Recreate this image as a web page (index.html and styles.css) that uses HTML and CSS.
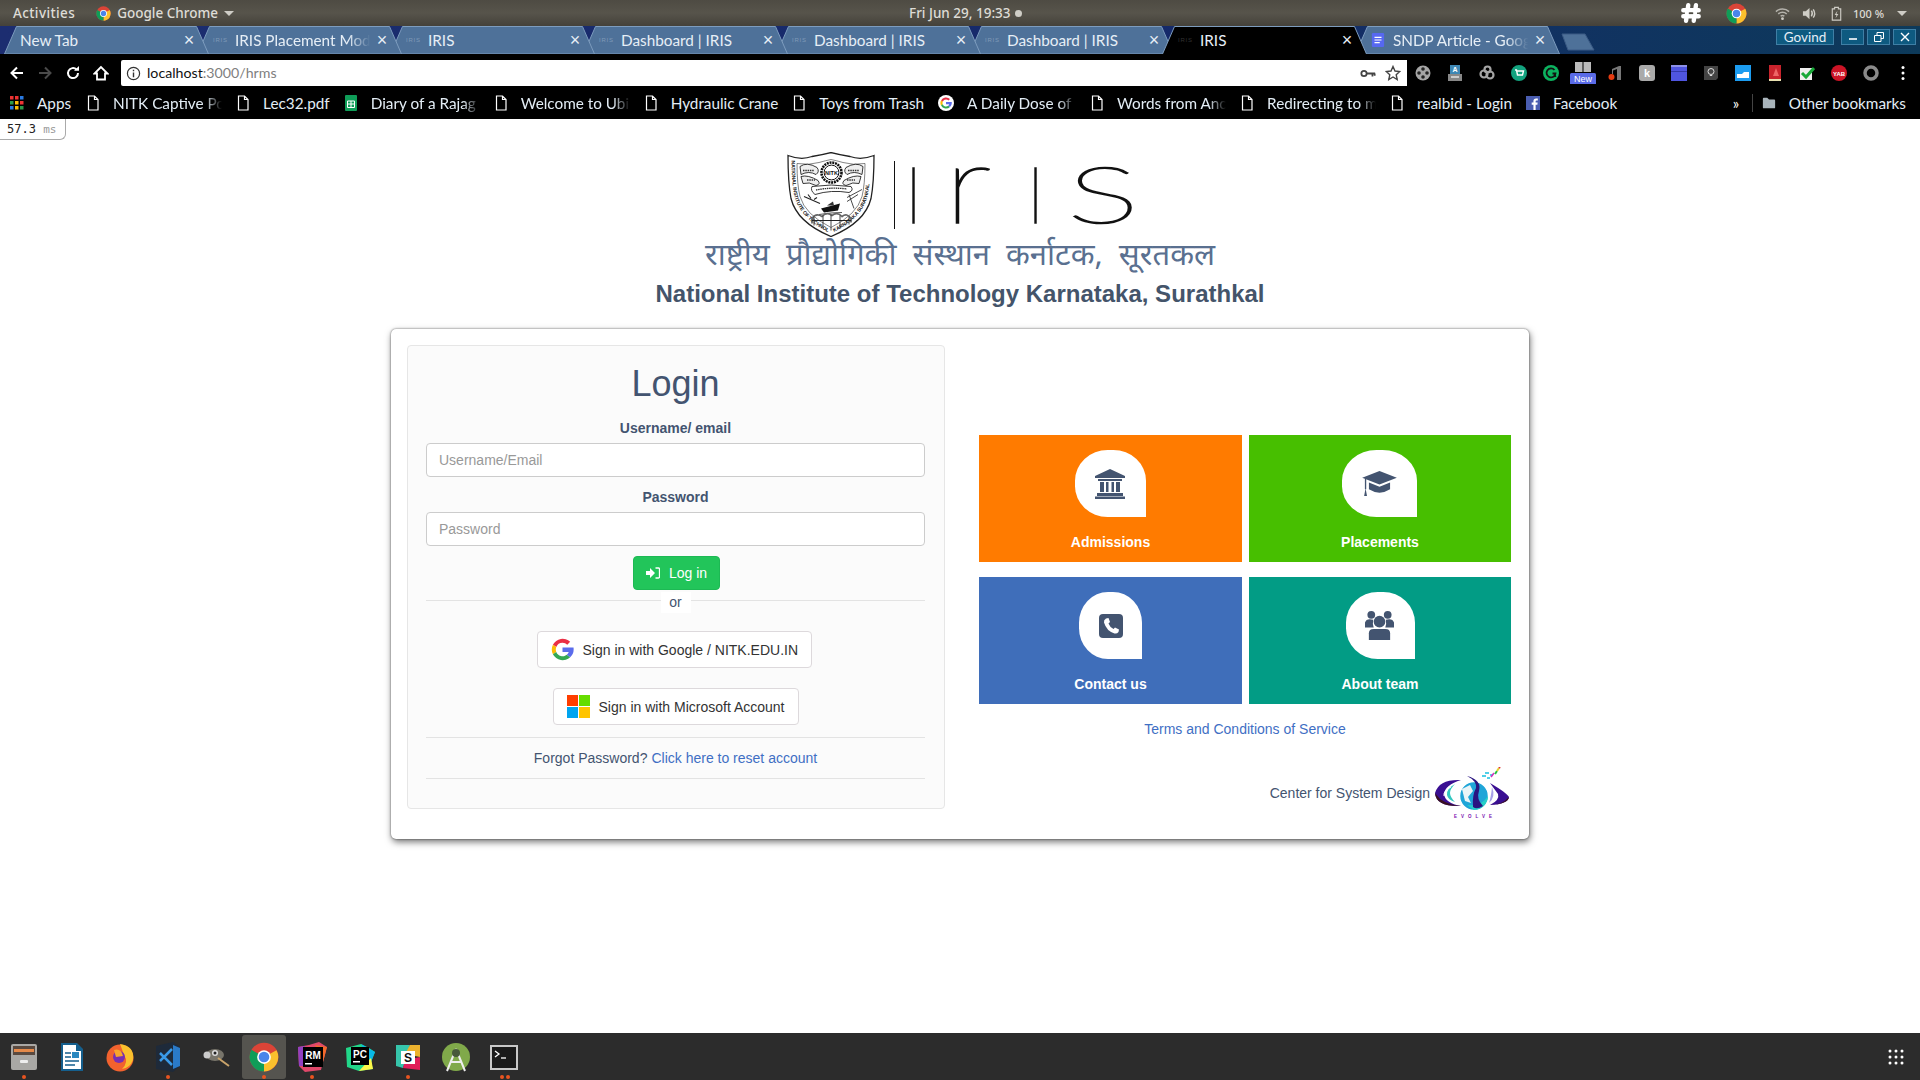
FILE: index.html
```html
<!DOCTYPE html>
<html lang="en">
<head>
<meta charset="utf-8">
<title>IRIS</title>
<link rel="stylesheet" href="styles.css">
</head>
<body>
<svg class="defs" width="0" height="0" aria-hidden="true">
  <defs>
    <symbol id="tabshape" viewBox="0 0 205 28"><path d="M0.5 28 L12.5 0.5 H192.5 L204.5 28 Z" fill="#4e7199" stroke="#7d9cbe" stroke-width="1"/></symbol>
    <symbol id="tabactive" viewBox="0 0 205 28"><path d="M0.5 28 L12.5 0.5 H192.5 L204.5 28" fill="#000" stroke="#7d9cbe" stroke-width="1"/></symbol>
    <symbol id="filei" viewBox="0 0 14 16"><path d="M2.5 1 H8.5 L12 4.5 V15 H2.5 Z M8.5 1 V4.5 H12" fill="none" stroke="#fff" stroke-width="1.2"/></symbol>
    <symbol id="chromei" viewBox="0 0 48 48">
      <circle cx="24" cy="24" r="23" fill="#db4437"/>
      <path d="M24 24 L44 13 A23 23 0 0 1 24 47 Z" fill="#fbc02d"/>
      <path d="M24 24 L24 47 A23 23 0 0 1 4 12.5 Z" fill="#0f9d58"/>
      <circle cx="24" cy="24" r="11" fill="#fff"/><circle cx="24" cy="24" r="8.5" fill="#4a85ea"/>
    </symbol>
    <symbol id="gi" viewBox="0 0 24 24">
      <path d="M12 5 A7 7 0 0 1 17 7 L20 4 A11.5 11.5 0 0 0 2 7 L5.5 9.5 A7 7 0 0 1 12 5Z" fill="#ea2f45"/>
      <path d="M2 7 A11.5 11.5 0 0 0 2 17 L5.5 14.5 A7 7 0 0 1 5.5 9.5Z" fill="#fbbc05"/>
      <path d="M2 17 A11.5 11.5 0 0 0 20 20 L16.5 17.5 A7 7 0 0 1 5.5 14.5Z" fill="#34a853"/>
      <path d="M23.5 10 H12 V14.5 H18.5 A6 6 0 0 1 16.5 17.5 L20 20 A11.5 11.5 0 0 0 23.5 10Z" fill="#5b6cec"/>
    </symbol>
  </defs>
</svg>

<header class="os-bar">
  <div class="os-left">
    <span class="os-act">Activities</span>
    <span class="os-app"><svg class="i16"><use href="#chromei"/></svg>Google Chrome<i class="caret"></i></span>
  </div>
  <div class="os-clock">Fri Jun 29, 19:33<i class="os-dot"></i></div>
  <div class="os-right">
    <svg class="slack" viewBox="0 0 20 20"><path d="M7.500 3 L5.500 17 M14.500 3 L12.500 17 M3 7.500 H17 M3 13 H17" stroke="#fff" stroke-width="4" stroke-linecap="round" fill="none"/><path d="M8 9.500 H12 V11 H8Z" fill="#4e4b43"/></svg>
    <svg class="os-chrome"><use href="#chromei"/></svg>
    <svg class="os-ico" viewBox="0 0 16 16"><path d="M1 6 A10 10 0 0 1 15 6 M3.500 8.500 A6.500 6.500 0 0 1 12.500 8.500 M6 11 A3 3 0 0 1 10 11" fill="none" stroke="#b5b3ac" stroke-width="1.600"/><circle cx="8" cy="13.500" r="1.500" fill="#cfcdc6"/></svg>
    <svg class="os-ico" viewBox="0 0 16 16"><path d="M1 5.500 H4 L8 2 V14 L4 10.500 H1Z" fill="#cfcdc6"/><path d="M10 5 Q12 8 10 11 M12 3.500 Q15 8 12 12.500" fill="none" stroke="#cfcdc6" stroke-width="1.500"/></svg>
    <svg class="os-ico" viewBox="0 0 16 16"><path d="M3.500 3 H6 V1.500 H10 V3 H12.500 V15 H3.500Z" fill="none" stroke="#cfcdc6" stroke-width="1.200"/><path d="M9 5 L6 9.500 H8 L7 13 L10 8.500 H8Z" fill="#cfcdc6"/></svg>
    <span class="os-pct">100 %</span>
    <i class="caret"></i>
  </div>
</header>

<nav class="tabstrip">
  <div class="tab tab-1"><svg class="tab-shape"><use href="#tabshape"/></svg><span class="tab-title">New Tab</span><span class="tab-x">×</span></div>
  <div class="tab tab-2"><svg class="tab-shape"><use href="#tabshape"/></svg><span class="fav">IRIS</span><span class="tab-title fade">IRIS Placement Mod</span><span class="tab-x">×</span></div>
  <div class="tab tab-3"><svg class="tab-shape"><use href="#tabshape"/></svg><span class="fav">IRIS</span><span class="tab-title">IRIS</span><span class="tab-x">×</span></div>
  <div class="tab tab-4"><svg class="tab-shape"><use href="#tabshape"/></svg><span class="fav">IRIS</span><span class="tab-title">Dashboard | IRIS</span><span class="tab-x">×</span></div>
  <div class="tab tab-5"><svg class="tab-shape"><use href="#tabshape"/></svg><span class="fav">IRIS</span><span class="tab-title">Dashboard | IRIS</span><span class="tab-x">×</span></div>
  <div class="tab tab-6"><svg class="tab-shape"><use href="#tabshape"/></svg><span class="fav">IRIS</span><span class="tab-title">Dashboard | IRIS</span><span class="tab-x">×</span></div>
  <div class="tab tab-7 active"><svg class="tab-shape"><use href="#tabactive"/></svg><span class="fav">IRIS</span><span class="tab-title">IRIS</span><span class="tab-x">×</span></div>
  <div class="tab tab-8"><svg class="tab-shape"><use href="#tabshape"/></svg><svg class="docfav" viewBox="0 0 16 16"><rect x="1" y="0" width="14" height="16" rx="1.500" fill="#5668f0"/><path d="M4 5 H12 M4 8 H12 M4 11 H10" stroke="#fff" stroke-width="1.200"/></svg><span class="tab-title fade">SNDP Article - Goog</span><span class="tab-x">×</span></div>
  <svg class="newtab" viewBox="0 0 34 18"><path d="M1 1 H24 L33 17 H7 Z" fill="#4e7199" stroke="#3a5a85"/></svg>
  <div class="win-ctl">
    <span class="win-user">Govind</span>
    <span class="win-btn"><svg viewBox="0 0 12 12"><path d="M2 8 H10" stroke="#fff" stroke-width="1.600"/></svg></span>
    <span class="win-btn"><svg viewBox="0 0 12 12"><path d="M1.500 4.500 H8 V10.500 H1.500Z M4 4.500 V1.500 H10.500 V7.500 H8" fill="none" stroke="#fff"/></svg></span>
    <span class="win-btn"><svg viewBox="0 0 12 12"><path d="M2 2 L10 10 M10 2 L2 10" stroke="#fff" stroke-width="1.400"/></svg></span>
  </div>
</nav>

<div class="toolbar">
  <div class="nav-btns">
    <svg class="nav" viewBox="0 0 16 16"><path d="M14 8 H3 M8 2.500 L2.500 8 L8 13.500" fill="none" stroke="#fff" stroke-width="2"/></svg>
    <svg class="nav" viewBox="0 0 16 16"><path d="M2 8 H13 M8 2.500 L13.500 8 L8 13.500" fill="none" stroke="#4a4a4a" stroke-width="2"/></svg>
    <svg class="nav" viewBox="0 0 16 16"><path d="M13 8 A5 5 0 1 1 11.500 4.500" fill="none" stroke="#fff" stroke-width="2"/><path d="M9 5.800 H14 V1Z" fill="#fff"/></svg>
    <svg class="nav" viewBox="0 0 16 16"><path d="M8 2 L1.500 8.500 H4 V14.500 H12 V8.500 H14.500Z" fill="none" stroke="#fff" stroke-width="1.800"/></svg>
  </div>
  <div class="url">
    <svg class="url-i" viewBox="0 0 16 16"><circle cx="8" cy="8" r="6.500" fill="none" stroke="#333" stroke-width="1.300"/><path d="M8 7 V12 M8 4 V5.600" stroke="#333" stroke-width="1.500"/></svg>
    <span class="url-text"><b>localhost</b>:3000/hrms</span>
    <svg class="url-key" viewBox="0 0 18 12"><circle cx="4.500" cy="6" r="3" fill="none" stroke="#444" stroke-width="2"/><path d="M7.500 6 H17 M14 6 V9.500 M16.500 6 V8.500" stroke="#444" stroke-width="2"/></svg>
    <svg class="url-star" viewBox="0 0 16 16"><path d="M8 1.500 L10 6 L14.800 6.500 L11.200 9.700 L12.200 14.500 L8 12 L3.800 14.500 L4.800 9.700 L1.200 6.500 L6 6Z" fill="none" stroke="#444" stroke-width="1.400"/></svg>
  </div>
  <div class="exts">
    <svg class="ext" viewBox="0 0 16 16"><circle cx="8" cy="8" r="7.500" fill="#a5a5a5"/><circle cx="8" cy="4" r="1.800" fill="#222"/><circle cx="8" cy="12" r="1.800" fill="#222"/><circle cx="4" cy="8" r="1.800" fill="#222"/><circle cx="12" cy="8" r="1.800" fill="#222"/></svg>
    <svg class="ext" viewBox="0 0 16 16"><path d="M3 0 H13 V10 H3Z" fill="#3f88b5"/><path d="M1 9 H15 V16 H1Z" fill="#888"/><path d="M4 11 H12 V13 H4Z" fill="#ccc"/><text x="8" y="7" class="svgt st7" text-anchor="middle" fill="#fff">A</text></svg>
    <svg class="ext" viewBox="0 0 16 16"><circle cx="5" cy="9" r="3.500" fill="none" stroke="#a5a5a5" stroke-width="2.200"/><circle cx="11" cy="10" r="3.500" fill="none" stroke="#a5a5a5" stroke-width="2.200"/><circle cx="8.500" cy="4.500" r="3" fill="none" stroke="#a5a5a5" stroke-width="2.200"/></svg>
    <svg class="ext" viewBox="0 0 16 16"><circle cx="8" cy="8" r="8" fill="#13a37f"/><path d="M4 5 H5.500 L6.500 10 H11.500 L12.500 6 H6" fill="none" stroke="#fff" stroke-width="1.400"/></svg>
    <svg class="ext" viewBox="0 0 16 16"><circle cx="8" cy="8" r="8" fill="#0cb25f"/><path d="M11.500 5 A4.500 4.500 0 1 0 12.500 8.500 H9.500 M11.500 8.500 L12.500 12" fill="none" stroke="#111" stroke-width="1.800"/></svg>
    <svg class="ext ext-new" viewBox="0 0 26 22"><path d="M5 0 H12.500 V10 H5Z M13.500 0 H21 V10 H13.500Z" fill="#bbb"/><rect x="0" y="11" width="26" height="12" rx="1.500" fill="#5a6be8"/><text x="13" y="20" class="svgt st9" text-anchor="middle" fill="#fff">New</text></svg>
    <svg class="ext" viewBox="0 0 16 16"><path d="M5 4 L12 1 H14 V15 H10 V4 L6 5.500 V9 H5Z" fill="#777"/><circle cx="4.500" cy="12" r="3" fill="#e63b10"/></svg>
    <svg class="ext" viewBox="0 0 16 16"><rect width="16" height="16" rx="3" fill="#aaa"/><text x="8" y="12" class="svgt st11" text-anchor="middle" fill="#fff">k</text></svg>
    <svg class="ext" viewBox="0 0 16 16"><rect width="16" height="16" fill="#4f55e0"/><rect width="16" height="2" fill="#8d90e8"/><rect y="6" width="16" height="1" fill="#3338a8"/></svg>
    <svg class="ext" viewBox="0 0 16 16"><path d="M1 1 H15 V13 L13 15 H1Z" fill="#444"/><circle cx="8" cy="6.500" r="3" fill="none" stroke="#ddd"/><path d="M6.800 10.500 H9.200" stroke="#ddd"/></svg>
    <svg class="ext" viewBox="0 0 16 16"><rect width="16" height="16" fill="#1c9cf0"/><path d="M2 9 H7 L9 7 H14 V13 H2Z" fill="#fff"/></svg>
    <svg class="ext" viewBox="0 0 16 16"><path d="M2 0 H14 V14 H2Z" fill="#c8232c"/><path d="M2 14 H14 V16 H2Z" fill="#e8e0b0"/><path d="M9 3 L12 11 H6Z" fill="#e66"/></svg>
    <svg class="ext" viewBox="0 0 16 16"><rect x="1" y="3" width="12" height="12" fill="#eee"/><path d="M3 8 L7 12 L15 3" fill="none" stroke="#18a838" stroke-width="3"/></svg>
    <svg class="ext" viewBox="0 0 16 16"><circle cx="8" cy="8" r="8" fill="#cc1426"/><text x="8" y="10.500" class="svgt st6" text-anchor="middle" fill="#fff">YAB</text></svg>
    <svg class="ext" viewBox="0 0 16 16"><circle cx="8" cy="8" r="6" fill="none" stroke="#8a8a8a" stroke-width="3.500"/></svg>
    <svg class="menu" viewBox="0 0 4 16"><circle cx="2" cy="2.500" r="1.500" fill="#fff"/><circle cx="2" cy="8" r="1.500" fill="#fff"/><circle cx="2" cy="13.500" r="1.500" fill="#fff"/></svg>
  </div>
</div>

<div class="bookmarks">
  <span class="bm bm-apps">
    <svg class="bm-i" viewBox="0 0 14 14"><rect width="3.500" height="3.500" fill="#e33"/><rect x="5" width="3.500" height="3.500" fill="#e33"/><rect x="10" width="3.500" height="3.500" fill="#2a7ae2"/><rect y="5" width="3.500" height="3.500" fill="#2a9a4a"/><rect x="5" y="5" width="3.500" height="3.500" fill="#fbbc05"/><rect x="10" y="5" width="3.500" height="3.500" fill="#e33"/><rect y="10" width="3.500" height="3.500" fill="#2a7ae2"/><rect x="5" y="10" width="3.500" height="3.500" fill="#fbbc05"/><rect x="10" y="10" width="3.500" height="3.500" fill="#2a9a4a"/></svg>
    <span class="bm-t">Apps</span></span>
  <span class="bm"><svg class="bm-i"><use href="#filei"/></svg><span class="bm-t cut">NITK Captive Po</span></span>
  <span class="bm"><svg class="bm-i"><use href="#filei"/></svg><span class="bm-t">Lec32.pdf</span></span>
  <span class="bm"><svg class="bm-i" viewBox="0 0 14 16"><rect x="1" width="12" height="16" rx="1" fill="#0f9d58"/><path d="M3.500 6 H10.500 V12.500 H3.500Z M3.500 9 H10.500 M7 6 V12.500" fill="none" stroke="#fff"/></svg><span class="bm-t cut">Diary of a Rajag</span></span>
  <span class="bm"><svg class="bm-i"><use href="#filei"/></svg><span class="bm-t cut">Welcome to Ubi</span></span>
  <span class="bm"><svg class="bm-i"><use href="#filei"/></svg><span class="bm-t">Hydraulic Crane</span></span>
  <span class="bm"><svg class="bm-i"><use href="#filei"/></svg><span class="bm-t">Toys from Trash</span></span>
  <span class="bm"><span class="g-disc"><svg viewBox="0 0 24 24"><use href="#gi"/></svg></span><span class="bm-t cut">A Daily Dose of</span></span>
  <span class="bm"><svg class="bm-i"><use href="#filei"/></svg><span class="bm-t cut">Words from Anc</span></span>
  <span class="bm"><svg class="bm-i"><use href="#filei"/></svg><span class="bm-t cut">Redirecting to m</span></span>
  <span class="bm"><svg class="bm-i"><use href="#filei"/></svg><span class="bm-t">realbid - Login</span></span>
  <span class="bm"><svg class="bm-i" viewBox="0 0 16 16"><rect width="16" height="16" fill="#4a5db0"/><path d="M11 16 V10 H13 L13.300 7.500 H11 V6 Q11 5 12 5 H13.500 V2.800 H11.500 Q8.500 2.800 8.500 5.800 V7.500 H6.500 V10 H8.500 V16Z" fill="#fff"/></svg><span class="bm-t">Facebook</span></span>
  <span class="bm-more">»</span>
  <span class="bm bm-other"><svg class="bm-i" viewBox="0 0 16 14"><path d="M1 2 Q1 1 2 1 H6 L8 3 H14 Q15 3 15 4 V12 Q15 13 14 13 H2 Q1 13 1 12Z" fill="#a9b4bb"/></svg><span class="bm-t">Other bookmarks</span></span>
</div>

<main class="page">
  <div class="perf"><span>57.3</span> <em>ms</em></div>

  <div class="brand">
    <div class="brand-logo">
      <svg class="shield" viewBox="0 0 88 84">
        <path d="M1 3 Q14 8 25 4 Q36 2 44 0 Q52 2 63 4 Q74 8 87 3 Q87 30 84 46 Q78 70 44 84 Q10 70 4 46 Q1 30 1 3Z" fill="#fff" stroke="#222" stroke-width="1.300"/>
        <path d="M10 11 Q22 13 32 10 Q39 8 44 7 Q49 8 56 10 Q66 13 78 11 Q78 32 75 44 Q70 62 44 75 Q18 62 13 44 Q10 32 10 11Z" fill="none" stroke="#333" stroke-width=".6"/>
        <path id="arcl" d="M4.500 7 Q4.500 32 8 46 Q15 67 42 80" fill="none"/>
        <path id="arcr" d="M46 80 Q73 67 80 46 Q83.500 32 83.500 7" fill="none"/>
        <text class="svgt st5b" fill="#111"><textPath href="#arcl" startOffset="1">NATIONAL INSTITUTE OF TECHNOLOGY</textPath></text>
        <text class="svgt st5b" fill="#111"><textPath href="#arcr" startOffset="1">KARNATAKA SURATHKAL</textPath></text>
        <circle cx="44.500" cy="20" r="10" fill="none" stroke="#111" stroke-width="2.600" stroke-dasharray="2 .8"/>
        <circle cx="44.500" cy="20" r="7.400" fill="#fff" stroke="#111" stroke-width="1"/>
        <text x="44.500" y="22" class="svgt st5c" text-anchor="middle" fill="#111">NITK</text>
        <path d="M13 14 Q20 9 30 15 Q33 19 29 22 Q22 18 14 22Z M76 14 Q69 9 59 15 Q56 19 60 22 Q67 18 75 22Z" fill="#eee" stroke="#222" stroke-width=".9"/>
        <path d="M16 18 H27 M61 18 H72" stroke="#333" stroke-width="1.500" stroke-dasharray="1.500 .8"/>
        <path d="M14 24 Q21 22 31 28 Q34 32 29 33 Q22 29 16 31Z M74 24 Q67 22 57 28 Q54 32 59 33 Q66 29 72 31Z" fill="#eee" stroke="#222" stroke-width=".9"/>
        <path d="M20 27.500 H28 M60 27.500 H68" stroke="#333" stroke-width="1.400" stroke-dasharray="1.500 .8"/>
        <path d="M25 34 Q44 31 64 34 Q67 38 62 40 Q44 37 28 42 Q23 38 25 34Z" fill="#fff" stroke="#222" stroke-width=".9"/>
        <path d="M29 37.500 Q44 34.500 60 36.500" fill="none" stroke="#333" stroke-width="1.300" stroke-dasharray="1.500 .7"/>
        <path d="M17 44 L33 51 M21 42 L24 46 M27 47 L30 45" stroke="#222" stroke-width="1.100"/>
        <path d="M60 45 L75 37 M60 49 L71 42 M62 42 L67 56" stroke="#333" stroke-width=".9"/>
        <path d="M34 56 L53 51 L51 58 L37 60Z" fill="#111"/><path d="M40 53 L46 49 L47 53Z" fill="#333"/><path d="M32 62 Q44 60 55 60" stroke="#555" fill="none"/>
        <path d="M25 71 V66 Q29 60 35 64 Q40 59 45 63 Q50 59 55 64 Q60 60 64 66 V70" fill="none" stroke="#666" stroke-width="1.700"/>
        <path d="M27 64 V73 M36 63 V76 M44 62 V78 M53 63 V76 M62 64 V72" stroke="#333" stroke-width=".9"/>
        <path d="M25 68 H64" stroke="#222" stroke-width="1"/>
      </svg>
      <div class="logo-rule"></div>
      <div class="logo-word"><span class="lw-i1">I</span><span class="lw-r">r</span><span class="lw-i2">I</span><span class="lw-s">S</span></div>
    </div>
    <div class="brand-hi">राष्ट्रीय प्रौद्योगिकी संस्थान कर्नाटक, सूरतकल</div>
    <div class="brand-en">National Institute of Technology Karnataka, Surathkal</div>
  </div>

  <section class="card">
    <form class="login">
      <h2 class="login-h">Login</h2>
      <label class="lbl">Username/ email</label>
      <input class="field" type="text" placeholder="Username/Email">
      <label class="lbl">Password</label>
      <input class="field" type="password" placeholder="Password">
      <div class="center"><button class="btn-login" type="button">
        <svg class="signin" viewBox="0 0 14 12"><path d="M0 4 H4 V1 L9 6 L4 11 V8 H0Z" fill="#fff"/><path d="M9.500 1 H12.500 Q13.500 1 13.500 2 V10 Q13.500 11 12.500 11 H9.500" fill="none" stroke="#fff" stroke-width="1.300"/></svg>
        Log in</button></div>
      <div class="or"><span>or</span></div>
      <div class="center"><a class="sso sso-g"><svg class="sso-i" viewBox="0 0 24 24"><use href="#gi"/></svg>Sign in with Google / NITK.EDU.IN</a></div>
      <div class="center"><a class="sso sso-m"><span class="ms"><i class="ms-r"></i><i class="ms-g"></i><i class="ms-b"></i><i class="ms-y"></i></span>Sign in with Microsoft Account</a></div>
      <div class="forgot">Forgot Password? <a class="link">Click here to reset account</a></div>
    </form>

    <div class="side">
      <div class="tiles">
        <a class="tile t-orange">
          <span class="chip chip-a"><svg class="ti ti-bank" viewBox="0 0 30 30"><path d="M15 0 L30 7 V9 H0 V7Z M3 10 H27 V12 H3Z M5 13 H9 V23 H5Z M11 13 H13.500 V23 H11Z M16.500 13 H19 V23 H16.500Z M21 13 H25 V23 H21Z M2 24 H28 V27 H2Z M0 27.500 H30 V30 H0Z" fill="#435470"/></svg></span>
          <span class="tile-l">Admissions</span>
        </a>
        <a class="tile t-green">
          <span class="chip chip-p"><svg class="ti ti-cap" viewBox="0 0 36 26"><path d="M18 0 L36 7 L18 14 L0 7Z" fill="#435470"/><path d="M7 12 L18 16.500 L29 12 V19 Q18 26 7 19Z" fill="#435470"/><path d="M3.500 8 V19" stroke="#435470" stroke-width="1.400"/><path d="M2 26 L3.500 18 L5 26Z" fill="#435470"/></svg></span>
          <span class="tile-l">Placements</span>
        </a>
        <a class="tile t-blue">
          <span class="chip chip-c"><svg class="ti ti-ph" viewBox="0 0 24 24"><rect width="24" height="24" rx="4" fill="#435470"/><path d="M7 4.500 L9.500 4 L11 8 L9.500 9.500 Q11 13.500 14.500 15 L16 13.500 L20 15.500 L19.500 18 Q18 20 15.500 19.500 Q7.500 17 5 8.500 Q4.500 6 7 4.500Z" fill="#fff"/></svg></span>
          <span class="tile-l">Contact us</span>
        </a>
        <a class="tile t-teal">
          <span class="chip chip-t"><svg class="ti ti-team" viewBox="0 0 30 30"><circle cx="6.500" cy="4" r="4" fill="#435470"/><circle cx="23.500" cy="4" r="4" fill="#435470"/><path d="M0 17 V12 Q1 8.500 5 8.500 L8.500 9 Q7.500 14 9 17Z M30 17 V12 Q29 8.500 25 8.500 L21.500 9 Q22.500 14 21 17Z" fill="#435470"/><circle cx="15" cy="11" r="6" fill="#435470"/><path d="M4 30 V23 Q4 18.500 9 18.500 H21 Q26 18.500 26 23 V30Z" fill="#435470"/></svg></span>
          <span class="tile-l">About team</span>
        </a>
      </div>
      <a class="terms">Terms and Conditions of Service</a>
      <div class="csd">
        <span class="csd-t">Center for System Design</span>
        <svg class="csd-logo" viewBox="0 0 76 52">
          <path d="M26 13 Q4 12 0 26 Q1 40 26 39 Q10 36 9 27 Q10 18 26 13Z" fill="#3a0f92"/>
          <path d="M0 26 Q1 40 26 39 Q14 38 5 32Z" fill="#3a1020"/>
          <path d="M20 17 Q11 22 12 28 Q13 33 20 35 Q15 30 15 26 Q15 22 20 17Z" fill="#33c7c0"/>
          <path d="M16 20 Q8 24 9 29" fill="none" stroke="#fff" stroke-width="1"/>
          <circle cx="39" cy="29" r="14.500" fill="#1fa5d8" stroke="#fff" stroke-width="1.500"/>
          <path d="M39 43 A14 14 0 0 0 53 29 Q46 40 32 38Z" fill="#26d0c8"/>
          <path d="M27 22 L35 18 L38 24 L33 30 L36 36 L30 34 Z" fill="#e9f4f7"/>
          <path d="M32 9 Q47 13 44 24 Q41 32 48 39 Q42 43 38 40 Q37 28 41 21 Q42 14 32 9Z" fill="#2a1580"/>
          <path d="M55 16 Q72 26 74 30 Q73 37 55 38 Q65 33 63 27Z" fill="#3a0f92"/>
          <path d="M74 30 Q73 37 55 38 Q67 38 74 30Z" fill="#3a1020"/>
          <path d="M57 20 Q56 30 54 36 Q61 30 57 20Z" fill="#a8a0e8"/>
          <path d="M47 9 H51 M52 11 H55 M50 6 H54 M55 8 H58" stroke="#19c0e0" stroke-width="1.600"/>
          <path d="M56 10 L59 6" stroke="#d030c0" stroke-width="1.600"/>
          <path d="M60 7 L62 4" stroke="#25c040" stroke-width="2"/><path d="M62 4 L64 1" stroke="#e7d030" stroke-width="2"/><path d="M64 1 L65 0" stroke="#e03030" stroke-width="2"/>
          <text x="40" y="51" class="svgt st5" text-anchor="middle" fill="#7a10b0">EVOLVE</text>
        </svg>
      </div>
    </div>
  </section>
</main>

<footer class="dock">
  <div class="dock-apps">
    <span class="app run1"><svg viewBox="0 0 30 30"><rect x="2" y="2" width="26" height="26" rx="2" fill="#a9a8a5"/><rect x="4" y="4" width="22" height="9" fill="#5a4a40"/><rect x="5" y="7" width="20" height="3" fill="#e58a4a"/><rect x="11" y="18" width="8" height="3" rx="1" fill="#eee"/></svg></span>
    <span class="app"><svg viewBox="0 0 30 30"><path d="M4 1 H20 L26 7 V29 H4Z" fill="#155f8d"/><rect x="6" y="3" width="13" height="24" fill="#fff"/><rect x="19" y="9" width="5" height="18" fill="#fff"/><path d="M8 11 H14 M8 15 H14 M8 19 H22 M8 23 H18" stroke="#155f8d" stroke-width="1.500"/><rect x="15" y="10" width="7" height="6" fill="#2a88c0"/></svg></span>
    <span class="app"><svg viewBox="0 0 30 30"><circle cx="15" cy="16" r="13.500" fill="#f2622e"/><path d="M15 2 Q30 4 28 18 Q25 26 17 27 Q24 20 19 13 Q17 7 15 2Z" fill="#fbc02d"/><circle cx="14" cy="15" r="6" fill="#7a2fb0"/><path d="M9 8 Q16 6 18 14 L11 15Z" fill="#f9a52a"/></svg></span>
    <span class="app run1"><svg viewBox="0 0 30 30"><path d="M3 4 L20 0 L27 5 V24 L20 30 L3 27Z" fill="#1e2a3a"/><path d="M20 3 L27 6 V24 L20 27Z" fill="#2a7ac8"/><path d="M7 11 L11 15 L7 19 M19 7 L11 15 L19 23" fill="none" stroke="#3a9ae8" stroke-width="2.500"/></svg></span>
    <span class="app"><svg viewBox="0 0 30 30"><ellipse cx="14" cy="13" rx="9" ry="6" fill="#77746a"/><circle cx="6" cy="13" r="3.500" fill="#ccc"/><circle cx="14" cy="11" r="3" fill="#ddd"/><circle cx="14" cy="11" r="1.500" fill="#222"/><path d="M17 16 L28 24" stroke="#c9a36a" stroke-width="2"/></svg></span>
    <span class="app app-on run1"><svg viewBox="0 0 30 30"><use href="#chromei"/></svg></span>
    <span class="app run1"><svg viewBox="0 0 30 30"><path d="M1 5 L12 3 L22 0 L30 5 L26 20 L24 28 L8 30 L2 24Z" fill="#e0486a"/><path d="M18 3 L30 5 L26 20Z" fill="#f26a2a"/><path d="M1 5 L8 4 L8 24 L2 24Z" fill="#9040c0"/><rect x="6" y="5" width="20" height="20" fill="#000"/><text x="16" y="17" class="svgt st10" text-anchor="middle" fill="#fff">RM</text><rect x="8" y="21" width="7" height="1.500" fill="#fff"/></svg></span>
    <span class="app"><svg viewBox="0 0 30 30"><path d="M1 6 L16 2 L24 6 L30 10 L26 20 L28 27 L14 29 L2 25Z" fill="#21d789"/><path d="M16 2 L30 10 L26 20Z" fill="#09b9e8"/><path d="M14 29 L28 27 L26 16Z" fill="#fcf84a"/><rect x="6" y="5" width="18" height="18" fill="#000"/><text x="15" y="16" class="svgt st10" text-anchor="middle" fill="#fff">PC</text><rect x="8" y="19" width="7" height="1.500" fill="#fff"/></svg></span>
    <span class="app run1"><svg viewBox="0 0 30 30"><path d="M3 3 H17 L10 26 L3 24Z" fill="#36c5ab"/><path d="M17 3 H27 V15 L12 12Z" fill="#ecb22e"/><path d="M27 15 V28 L10 26 L12 18Z" fill="#e01e5a"/><rect x="8" y="9" width="14" height="13" fill="#fff"/><text x="15" y="20" class="svgt st12" text-anchor="middle" fill="#111">S</text></svg></span>
    <span class="app"><svg viewBox="0 0 30 30"><circle cx="15" cy="15" r="14" fill="#80a94a"/><path d="M15 7 L6 29 M15 7 L24 29 M9 20 H21" fill="none" stroke="#eee" stroke-width="2"/><circle cx="15" cy="11" r="4" fill="#47583a"/></svg></span>
    <span class="app run2"><svg viewBox="0 0 30 30"><rect x="1" y="3" width="28" height="25" fill="#c8c8c8"/><rect x="3" y="5" width="24" height="21" fill="#1a1a1a"/><path d="M6 9 L10 12 L6 15" fill="none" stroke="#fff" stroke-width="1.300"/><path d="M12 16 H17" stroke="#fff" stroke-width="1.300"/></svg></span>
  </div>
  <svg class="dock-grid" viewBox="0 0 18 18"><g fill="#fff"><circle cx="3" cy="3" r="1.500"/><circle cx="9" cy="3" r="1.500"/><circle cx="15" cy="3" r="1.500"/><circle cx="3" cy="9" r="1.500"/><circle cx="9" cy="9" r="1.500"/><circle cx="15" cy="9" r="1.500"/><circle cx="3" cy="15" r="1.500"/><circle cx="9" cy="15" r="1.500"/><circle cx="15" cy="15" r="1.500"/></g></svg>
</footer>
</body>
</html>
```
FILE: styles.css
```css
* { box-sizing: border-box; }
html, body { margin: 0; height: 100%; }
body { width: 1920px; height: 1080px; overflow: hidden; display: flex; flex-direction: column; font-family: "Liberation Sans", Arial, sans-serif; font-size: 14px; color: #435470; background: #fff; }
.defs { position: absolute; }
svg { display: block; flex: none; }
.svgt { font-family: "Liberation Sans", sans-serif; font-weight: 700; }
.st5b { font-size: 5px; }
.st5c { font-size: 5.500px; }
.st5 { font-size: 4.500px; letter-spacing: 4px; }
.st6 { font-size: 6px; }
.st7 { font-size: 7px; }
.st9 { font-size: 9px; font-weight: 400; }
.st10 { font-size: 10px; }
.st11 { font-size: 11px; }
.st12 { font-size: 12px; }

/* OS top bar */
.os-bar { height: 26px; flex: none; display: flex; align-items: center; position: relative; padding: 0 13px 0 13px; background: linear-gradient(#4e4b43, #57544b 50%, #44413a); color: #dedcd6; font-family: "Noto Sans", sans-serif; font-size: 13.500px; font-weight: 500; }
.os-left { display: flex; align-items: center; gap: 21px; }
.os-act { letter-spacing: .4px; }
.os-app { display: flex; align-items: center; gap: 6px; }
.i16 { width: 15px; height: 15px; }
.caret { width: 0; height: 0; border: 5px solid transparent; border-top-color: #cfcdc6; border-bottom: 0; display: block; }
.os-clock { position: absolute; left: 909px; top: 0; height: 26px; display: flex; align-items: center; gap: 4px; }
.os-dot { width: 7px; height: 7px; border-radius: 50%; background: #cfcdc6; }
.os-right { margin-left: auto; display: flex; align-items: center; }
.slack { width: 22px; height: 22px; margin-right: 24px; }
.os-chrome { width: 21px; height: 21px; margin-right: 28px; }
.os-ico { width: 15px; height: 15px; margin-right: 12px; }
.os-pct { font-size: 11px; margin-right: 13px; margin-left: -3px; }

/* Tabs */
.tabstrip { height: 28px; flex: none; display: flex; align-items: stretch; position: relative; padding-left: 4px; background: linear-gradient(90deg, #1c2d70 0, #15296a 60%, #0d3a5a 100%); font-family: "Lato", sans-serif; font-size: 15.300px; color: #e6eef6; }
.tab { width: 205px; margin-right: -12px; position: relative; display: flex; align-items: center; padding: 0 11px 0 16px; }
.tab-1 { z-index: 8; } .tab-2 { z-index: 7; } .tab-3 { z-index: 6; } .tab-4 { z-index: 5; } .tab-5 { z-index: 4; } .tab-6 { z-index: 3; } .tab-7 { z-index: 9; } .tab-8 { z-index: 2; }
.tab-shape { position: absolute; left: 0; top: 0; width: 205px; height: 28px; }
.fav { position: relative; width: 22px; flex: none; font: 6px "Liberation Sans", sans-serif; letter-spacing: .8px; color: #7f9ab8; }
.active .fav { color: #333; }
.docfav { position: relative; width: 14px; height: 16px; margin-right: 8px; }
.tab-title { position: relative; flex: 1; min-width: 0; white-space: nowrap; }
.tab-title.fade { -webkit-mask-image: linear-gradient(90deg, #000 82%, transparent 98%); mask-image: linear-gradient(90deg, #000 82%, transparent 98%); }
.tab-x { position: relative; width: 18px; flex: none; text-align: center; font: 18px "Liberation Sans", sans-serif; color: #e6eef6; }
.newtab { position: relative; width: 34px; height: 18px; margin: 7px 0 0 13px; z-index: 1; }
.win-ctl { position: absolute; right: 4px; top: 3px; display: flex; gap: 3px; }
.win-btn, .win-user { height: 16px; background: #0e5a80; border: 1px solid #3f7fa5; display: flex; align-items: center; justify-content: center; }
.win-user { width: 58px; margin-right: 4px; color: #e6eef6; font-size: 13.500px; }
.win-btn { width: 23px; }
.win-btn svg { width: 12px; height: 12px; }

/* Toolbar */
.toolbar { height: 32px; flex: none; padding-top: 6px; background: #000; display: flex; align-items: stretch; }
.nav-btns { width: 121px; padding-left: 9px; display: flex; align-items: center; gap: 12px; }
.nav { width: 16px; height: 16px; }
.url { width: 1286px; background: #fff; border-radius: 2px 0 0 2px; display: flex; align-items: center; padding-left: 5px; font-family: "Lato", sans-serif; font-size: 14.200px; color: #808080; }
.url b { font-weight: 400; color: #111; }
.url-i { width: 15px; height: 15px; margin-right: 6px; }
.url-text { flex: 1; padding-bottom: 2px; }
.url-key { width: 16px; height: 11px; margin-right: 9px; }
.url-star { width: 16px; height: 16px; margin-right: 6px; }
.exts { flex: 1; display: flex; align-items: center; padding-left: 8px; gap: 16px; }
.ext { width: 16px; height: 16px; }
.ext-new { width: 26px; height: 22px; margin: 0 -5px; }
.menu { width: 4px; height: 16px; margin-left: 6px; }

/* Bookmarks */
.bookmarks { height: 33px; flex: none; padding: 1px 0 0 10px; background: #000; display: flex; align-items: center; font-family: "Lato", sans-serif; font-size: 15.300px; color: #e3edf5; }
.bm { display: flex; align-items: center; gap: 13px; margin-right: 14px; }
.bm-apps { margin-right: 15px; }
.bm-i { width: 14px; height: 16px; }
.bm-t { white-space: nowrap; }
.bm-t.cut { width: 109px; -webkit-mask-image: linear-gradient(90deg, #000 84%, transparent 100%); mask-image: linear-gradient(90deg, #000 84%, transparent 100%); }
.g-disc { width: 16px; height: 16px; border-radius: 50%; background: #fff; padding: 2px; }
.bm-more { margin-left: auto; color: #fff; font-size: 15px; width: 20px; border-right: 1px solid #444; margin-right: 9px; }
.bm-other { margin-right: 14px; gap: 13px; }

/* Page */
.page { flex: 1; min-height: 0; position: relative; padding-top: 33px; background: #fff; }
.perf { position: absolute; left: 0; top: 0; width: 66px; height: 21px; border: 1px solid #aaa; border-width: 0 1px 1px 0; border-radius: 0 0 6px 0; background: #fff; padding: 3px 0 0 7px; font: 12px "DejaVu Sans Mono", monospace; color: #222; }
.perf em { font-style: normal; color: #999; font-size: 11px; }
.brand { display: flex; flex-direction: column; align-items: center; height: 176px; margin-bottom: 1px; }
.brand-logo { width: 346px; height: 85px; display: flex; align-items: center; }
.shield { width: 88px; height: 85px; }
.logo-rule { width: 1px; height: 68px; margin-left: 19px; background: #111; }
.logo-word { display: flex; align-items: baseline; margin-top: -16px; font: 100 78px/85px "Lato", sans-serif; color: #111; -webkit-text-stroke: 1.500px #111; white-space: nowrap; }
.lw-i1 { margin-left: 9px; width: 40px; }
.lw-r { width: 82px; font-size: 110px; line-height: 85px; transform: scaleX(1.25); transform-origin: 0 50%; }
.lw-i2 { width: 41px; }
.lw-s { width: 56px; transform: scaleX(1.75); transform-origin: 0 50%; }
.brand-hi { height: 39px; margin-top: -3px; font: 31px/39px "Noto Sans", "Lohit Devanagari", sans-serif; word-spacing: 8px; color: #5a7090; white-space: nowrap; }
.brand-en { font: 700 24px/36px "Liberation Sans", sans-serif; color: #44546a; white-space: nowrap; margin-top: 3px; }

.card { width: 1138px; height: 510px; margin: 0 auto; padding: 16px 18px 0 16px; background: #fff; border-radius: 5px; box-shadow: 1px 3px 7px rgba(0,0,0,.55), 0 0 2px rgba(0,0,0,.6); display: flex; }
.login { width: 538px; height: 464px; padding: 0 19px 0 18px; background: #fbfbfb; border: 1px solid #e6e6e6; border-radius: 4px; display: flex; flex-direction: column; }
.login-h { margin: 14px 0 0; font-size: 36px; line-height: 48px; font-weight: 400; text-align: center; color: #435470; }
.lbl { font-weight: 700; text-align: center; line-height: 20px; margin-top: 10px; height: 20px; }
.lbl + .field { margin-top: 5px; }
.field + .lbl { margin-top: 10px; }
.field { width: 100%; height: 34px; padding: 0 12px; border: 1px solid #ccc; border-radius: 4px; background: #fff; font: 14px "Liberation Sans", sans-serif; outline: none; }
.field::placeholder { color: #999; }
.center { display: flex; justify-content: center; }
.btn-login { margin: 10px 0 0 2px; width: 87px; height: 34px; border: 1px solid #1db954; border-radius: 4px; background: #22c55a; color: #fff; font: 14px "Liberation Sans", sans-serif; display: flex; align-items: center; justify-content: center; gap: 9px; padding: 0; }
.signin { width: 14px; height: 12px; }
.or { margin-top: 2px; height: 20px; text-align: center; line-height: 21px; background: linear-gradient(#e3e3e3, #e3e3e3) center 8px / 100% 1px no-repeat; }
.or span { display: inline-block; width: 30px; background: #fff; }
.sso { display: flex; align-items: center; height: 37px; background: #fff; border: 1px solid #ddd9dc; border-radius: 4px; color: #333; }
.sso-g { width: 275px; margin: 19px 3px 0 0; padding-left: 13px; gap: 9px; }
.sso-m { width: 246px; margin-top: 20px; padding-left: 13px; gap: 9px; }
.sso-i { width: 23px; height: 23px; }
.ms { width: 23px; height: 23px; display: grid; grid-template-columns: 1fr 1fr; gap: 1px; }
.ms i { display: block; }
.ms-r { background: #ff3d00; } .ms-g { background: #66dd00; } .ms-b { background: #00a4ef; } .ms-y { background: #ffc400; }
.forgot { margin-top: 12px; height: 42px; border-top: 1px solid #e3e3e3; border-bottom: 1px solid #e3e3e3; display: flex; align-items: center; justify-content: center; gap: 4px; }
.link, .terms { color: #3f6fc4; }

.side { margin-left: 34px; width: 532px; display: flex; flex-direction: column; }
.tiles { margin-top: 90px; display: grid; grid-template-columns: 263px 262px; grid-auto-rows: 127px; column-gap: 7px; row-gap: 15px; }
.tile { display: flex; flex-direction: column; align-items: center; padding-top: 15px; color: #fff; font-weight: 700; }
.t-orange { background: #ff7b00; } .t-green { background: #47bf00; } .t-blue { background: #3f6eba; } .t-teal { background: #029c85; }
.chip { height: 67px; background: #fff; border-radius: 46% 46% 0 46%; display: flex; align-items: center; justify-content: center; }
.chip-a { width: 71px; padding-right: 2px; } .chip-p { width: 75px; margin-right: 1px; } .chip-c { width: 63px; } .chip-t { width: 69px; padding-right: 1px; }
.tile-l { margin-top: 15px; line-height: 20px; }
.ti-bank { width: 30px; height: 30px; }
.ti-cap { width: 35px; height: 25px; }
.ti-ph { width: 24px; height: 24px; }
.ti-team { width: 29px; height: 29px; }
.terms { margin-top: 15px; line-height: 20px; text-align: center; }
.csd { margin-top: 28px; display: flex; align-items: center; justify-content: flex-end; gap: 5px; }
.csd-t { color: #435470; }
.csd-logo { width: 76px; height: 52px; }

/* Dock */
.dock { height: 47px; flex: none; background: #2c2c2c; display: flex; align-items: center; justify-content: space-between; padding: 0 15px 0 0; }
.dock-apps { display: flex; padding-left: 2px; gap: 4px; }
.app { width: 44px; height: 44px; display: flex; align-items: center; justify-content: center; position: relative; border-radius: 3px; }
.app svg { width: 30px; height: 30px; }
.app-on { background: #55544f; }
.run1::after { content: ""; position: absolute; bottom: 0; left: 20px; width: 4px; height: 4px; border-radius: 50%; background: #e95420; }
.run2::after { content: ""; position: absolute; bottom: 0; left: 18px; width: 4px; height: 4px; border-radius: 50%; background: #e95420; box-shadow: 6px 0 #e95420; }
.dock-grid { width: 18px; height: 18px; }
```
